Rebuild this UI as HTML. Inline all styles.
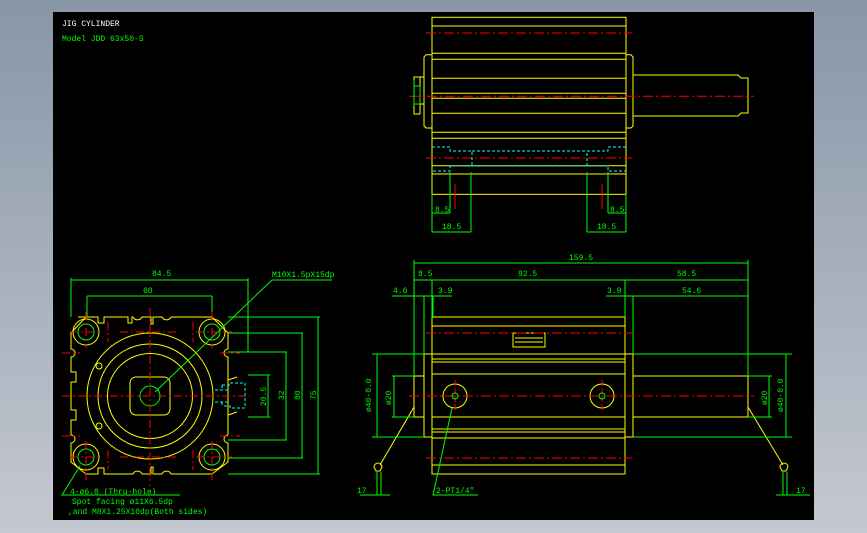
<!DOCTYPE html>
<html><head><style>
html,body{margin:0;padding:0;width:867px;height:533px;overflow:hidden;background:linear-gradient(#8896a8,#c4c8d0);}
svg{position:absolute;left:0;top:0}
text{font-family:"Liberation Mono",monospace;font-size:8px}
</style></head><body>
<svg width="867" height="533" viewBox="0 0 867 533">
<rect x="53" y="12" width="761" height="508" fill="#000"/>
<text x="62" y="26" fill="#fff">JIG CYLINDER</text>
<text x="62" y="41" fill="#0f0">Model JDD 63x50-S</text>

<!-- TOP VIEW -->
<g fill="none" stroke="#ff0" stroke-width="1">
<rect x="432" y="17.3" width="194" height="177"/>
<path d="M432 26H626M432 53.3H626M432 59.3H626M432 78.3H626M432 93.3H626M432 98.3H626M432 113.3H626M432 132.3H626M432 138.3H626M432 165.7H626M432 174H626"/>
<path d="M432 54.7H426L424 57V126L426 128H432M626 54.7H631L633 57V126L631 128H626"/>
<path d="M424 77H420V104H424M420 77H414V114H420M420 104V114"/>
<path d="M633 75H738L741 78H748V113H741L738 116H633"/>
</g>
<path d="M409 96.3H754M426 33H632M426 158H632" stroke="#f00" stroke-dasharray="10,3,2,3"/>
<path d="M432 147H450V151H472V166H450V171H432M626 147H608V151H587V166H608V171H626M472 151H587M472 166H587" fill="none" stroke="#0ff" stroke-dasharray="3,2"/>
<path d="M455 184V209M602 184V209" stroke="#f00"/>
<g stroke="#0f0" fill="none">
<path d="M414 80V106M414 86H420V104H414"/>
<path d="M432 194V232M450 172V213M471 172V232M587 172V232M608 172V213M626 194V232M432 213H450M608 213H626M432 232H471M587 232H626"/>
</g>
<g fill="#0f0"><text x="435" y="212">8.5</text><text x="610" y="212">8.5</text><text x="442" y="229">18.5</text><text x="597" y="229">18.5</text></g>

<!-- FRONT VIEW -->
<g fill="none" stroke="#ff0">
<rect x="432" y="317" width="193" height="157"/>
<path d="M432 326H625M432 354H625M432 359H625M432 362H625M432 374H625M432 417H625M432 429H625M432 432H625M432 438H625M432 465H625"/>
<path d="M432 354H424V437H432M625 354H633V437H625"/>
<path d="M424 376H414V417H424"/>
<path d="M633 376H748V417H633"/>
<rect x="513" y="333" width="32" height="14"/>
<path d="M515 338H543M515 342H543"/>
<circle cx="455" cy="396" r="12"/><circle cx="602" cy="396" r="12"/>
<path d="M414 407L380 465M748 407L783 465"/>
<path d="M374 467a4 4 0 0 1 8 0l-2 4h-4z M780 467a4 4 0 0 1 8 0l-2 4h-4z"/>
</g>
<path d="M409 396H754M426 333H632M426 458H632" stroke="#f00" stroke-dasharray="10,3,2,3"/>
<path d="M455 380V412M602 380V412" stroke="#f00" stroke-dasharray="6,2"/>
<g stroke="#0f0" fill="none">
<circle cx="455" cy="396" r="3"/><circle cx="602" cy="396" r="3"/>
<path d="M414 260V376M748 260V376M414 263H748M414 280H748M432 280V317M625 280V317M392 296H452M606 296H748M424 296V354M433 296V317M633 296V354"/>
<path d="M377 354V437M372 354H424M372 437H424M394 376V417M392 376H414M392 417H414M786 354V437M633 354H792M633 437H792M769 376V417M748 376H772M748 417H772"/>
<path d="M360 495H390M377 472V495M381 472V495M776 495H810M783 472V495M787 472V495"/>
<path d="M452 408L433 495H478"/>
</g>
<g fill="#0f0">
<text x="569" y="260">159.5</text><text x="418" y="276">8.5</text><text x="518" y="276">92.5</text><text x="677" y="276">58.5</text>
<text x="393" y="293">4.6</text><text x="438" y="293">3.9</text><text x="607" y="293">3.9</text><text x="682" y="293">54.6</text>
<text x="357" y="493">17</text><text x="796" y="493">17</text><text x="436" y="493">2-PT1/4"</text>
<text transform="translate(371 412) rotate(-90)">ø40-0.0</text><text transform="translate(391 405) rotate(-90)">ø20</text>
<text transform="translate(767 405) rotate(-90)">ø20</text><text transform="translate(783 412) rotate(-90)">ø40-0.0</text>
</g>

<!-- SIDE VIEW -->
<g fill="none" stroke="#ff0">
<path d="M78 317H98V323H104V317H128V323H132V317H133M133 317a5 5 0 0 0 9 0H151V324H153V317H162a5 5 0 0 0 9 0H204L212 317 228 333V349a4 4 0 0 0 0 8V380L237 377 M228 415L237 412 M228 435a4 4 0 0 0 0 8V462L212 474H171a5 5 0 0 0 -9 0H153V467H151V474H142a5 5 0 0 0 -9 0H104V468H98V474H86L71 462V443a4 4 0 0 0 0 -8V420H76V410H71V382H76V372H71V357a4 4 0 0 0 0 -8V333L86 317H98"/>
<path d="M228 357V435"/>
<circle cx="150" cy="396" r="63"/><circle cx="150" cy="396" r="52"/><circle cx="150" cy="396" r="42.5"/>
<rect x="130" y="377" width="40" height="38" rx="6"/>
<circle cx="86" cy="332" r="13"/><circle cx="212" cy="332" r="13"/><circle cx="86" cy="457" r="13"/><circle cx="212" cy="457" r="13"/>
<circle cx="99" cy="366" r="3"/><circle cx="99" cy="426" r="3"/>
</g>
<g fill="none" stroke="#0f0">
<circle cx="150" cy="396" r="10"/>
<circle cx="86" cy="332" r="8"/><circle cx="212" cy="332" r="8"/><circle cx="86" cy="457" r="8"/><circle cx="212" cy="457" r="8"/>
<path d="M71 317V278M248 278V352M71 280H248M87 296V317M212 296V317M87 296H212"/>
<path d="M228 317H320M228 333H303M228 352H287M248 375H270M248 417H270M228 440H287M228 458H303M228 474H320M318 317V474M302 333V458M286 352V440M268 375V417"/>
<path d="M155 392L272 280H332M80 466L62 495H180"/>
</g>
<path d="M222 385V390M222 402V407M222 385H230V383H245V408H230V406H222M215 390H230M215 402H230" fill="none" stroke="#0ff" stroke-dasharray="3,2"/>
<path d="M62 396H250M150 308V486M70 332H102M196 332H232M70 457H102M196 457H232M86 312V348M86 441V480M212 312V348M212 441V480M108 322V342M193 322V342M108 450V470M193 450V470M62 353H80M62 436H80M220 353H240M220 436H240M120 332H178M120 457H178M70 353V353" stroke="#f00" stroke-dasharray="8,3,2,3"/>
<g fill="#0f0">
<text x="152" y="276">84.5</text><text x="143" y="293">60</text>
<text x="272" y="277">M10X1.5pX15dp</text>
<text transform="translate(266 406) rotate(-90)">20.5</text><text transform="translate(284 400) rotate(-90)">32</text>
<text transform="translate(300 400) rotate(-90)">80</text><text transform="translate(316 400) rotate(-90)">75</text>
<text x="70" y="494">4-ø6.8 (Thru-hole)</text>
<text x="72" y="504">Spot facing ø11X6.5dp</text>
<text x="68" y="514">,and M8X1.25X10dp(Both sides)</text>
</g>
</svg>
</body></html>
